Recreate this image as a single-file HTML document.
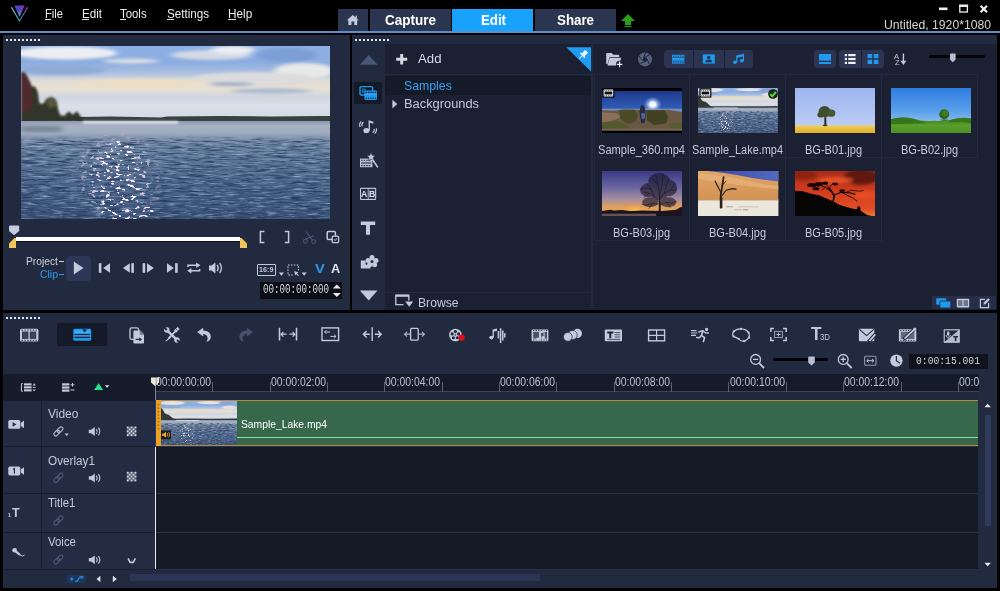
<!DOCTYPE html>
<html lang="en">
<head>
<meta charset="utf-8">
<title>Untitled, 1920*1080 - Video Editor</title>
<style>
html,body{margin:0;padding:0;background:#000;}
body{width:1000px;height:591px;overflow:hidden;font-family:"Liberation Sans",sans-serif;}
#app{position:relative;width:1000px;height:591px;background:#000;overflow:hidden;}
#app div,#app span.t,#app svg.i{position:absolute;box-sizing:border-box;}
span.t{white-space:nowrap;transform-origin:0 50%;}
svg.i{overflow:visible;}
u{text-decoration:underline;text-underline-offset:1px;}

</style>
</head>
<body>
<svg width="0" height="0" style="position:absolute" aria-hidden="true">
<defs>
<linearGradient id="lkSky" x1="0" y1="0" x2="0" y2="1">
 <stop offset="0" stop-color="#8db0e4"/>
 <stop offset="0.22" stop-color="#8cade0"/>
 <stop offset="0.36" stop-color="#abc0e0"/>
 <stop offset="0.46" stop-color="#dedcd8"/>
 <stop offset="0.57" stop-color="#e8e0d2"/>
 <stop offset="0.67" stop-color="#cfd6e2"/>
 <stop offset="0.8" stop-color="#dadfe8"/>
 <stop offset="1" stop-color="#d2d8e2"/>
</linearGradient>
<linearGradient id="lkWater" x1="0" y1="0" x2="0" y2="1">
 <stop offset="0" stop-color="#8a98b0"/>
 <stop offset="0.05" stop-color="#a7b1c4"/>
 <stop offset="0.135" stop-color="#a0abbf"/>
 <stop offset="0.17" stop-color="#7e90ab"/>
 <stop offset="0.32" stop-color="#66809f"/>
 <stop offset="0.55" stop-color="#526b8f"/>
 <stop offset="0.8" stop-color="#435d83"/>
 <stop offset="1" stop-color="#3a5378"/>
</linearGradient>
<linearGradient id="lkFade" x1="0" y1="0" x2="0" y2="1">
 <stop offset="0" stop-color="#9ca8bc" stop-opacity="1"/>
 <stop offset="0.3" stop-color="#93a1b8" stop-opacity="0.9"/>
 <stop offset="1" stop-color="#7e90ab" stop-opacity="0"/>
</linearGradient>
<linearGradient id="lkWaterS" x1="0" y1="0" x2="0" y2="1">
 <stop offset="0" stop-color="#8a98b0"/>
 <stop offset="0.06" stop-color="#a7b1c4"/>
 <stop offset="0.13" stop-color="#9ba7bd"/>
 <stop offset="0.2" stop-color="#6c83a3"/>
 <stop offset="0.45" stop-color="#566f94"/>
 <stop offset="0.8" stop-color="#48628a"/>
 <stop offset="1" stop-color="#3f597f"/>
</linearGradient>
<radialGradient id="lkGl" cx="0.5" cy="0.5" r="0.5">
 <stop offset="0" stop-color="#fff" stop-opacity="1"/>
 <stop offset="0.55" stop-color="#fff" stop-opacity="0.75"/>
 <stop offset="1" stop-color="#fff" stop-opacity="0"/>
</radialGradient>
<filter id="lkBlur" x="-20%" y="-50%" width="140%" height="200%"><feGaussianBlur stdDeviation="3 1.6"/></filter>
<filter id="lkBlur2" x="-20%" y="-50%" width="140%" height="200%"><feGaussianBlur stdDeviation="0.8"/></filter>
<filter id="lkBlur3" x="-5%" y="-50%" width="110%" height="200%"><feGaussianBlur stdDeviation="0.5"/></filter>
<filter id="lkRip" x="0" y="0" width="100%" height="100%" color-interpolation-filters="sRGB">
 <feTurbulence type="fractalNoise" baseFrequency="0.06 0.55" numOctaves="3" seed="7" result="n"/>
 <feColorMatrix in="n" type="matrix" values="0 0 0 0 0.14  0 0 0 0 0.23  0 0 0 0 0.37  2.4 0 0 0 -0.98"/>
</filter>
<filter id="lkRipL" x="0" y="0" width="100%" height="100%" color-interpolation-filters="sRGB">
 <feTurbulence type="fractalNoise" baseFrequency="0.07 0.6" numOctaves="3" seed="19" result="n"/>
 <feColorMatrix in="n" type="matrix" values="0 0 0 0 0.60  0 0 0 0 0.68  0 0 0 0 0.80  2.2 0 0 0 -1.1"/>
</filter>
<filter id="lkSpk" x="0" y="0" width="100%" height="100%" color-interpolation-filters="sRGB">
 <feTurbulence type="fractalNoise" baseFrequency="0.2 0.36" numOctaves="2" seed="3" result="n"/>
 <feColorMatrix in="n" type="matrix" values="0 0 0 0 1  0 0 0 0 0.91  0 0 0 0 0.97  11 0 0 0 -6.45" result="d"/>
 <feComposite in="d" in2="SourceGraphic" operator="in"/>
</filter>

<filter id="lsRip" x="0" y="0" width="100%" height="100%" color-interpolation-filters="sRGB">
 <feTurbulence type="fractalNoise" baseFrequency="0.25 0.9" numOctaves="2" seed="5" result="n"/>
 <feColorMatrix in="n" type="matrix" values="0 0 0 0 0.16  0 0 0 0 0.23  0 0 0 0 0.34  2.0 0 0 0 -0.8"/>
</filter>
<filter id="lsRipL" x="0" y="0" width="100%" height="100%" color-interpolation-filters="sRGB">
 <feTurbulence type="fractalNoise" baseFrequency="0.3 1.0" numOctaves="2" seed="11" result="n"/>
 <feColorMatrix in="n" type="matrix" values="0 0 0 0 0.62  0 0 0 0 0.68  0 0 0 0 0.78  2.0 0 0 0 -1.0"/>
</filter>
<filter id="lsSpk" x="0" y="0" width="100%" height="100%" color-interpolation-filters="sRGB">
 <feTurbulence type="fractalNoise" baseFrequency="0.7 0.9" numOctaves="2" seed="3" result="n"/>
 <feColorMatrix in="n" type="matrix" values="0 0 0 0 1  0 0 0 0 0.95  0 0 0 0 1  10 0 0 0 -5.9" result="d"/>
 <feComposite in="d" in2="SourceGraphic" operator="in"/>
</filter>
<filter id="lsB" x="-20%" y="-50%" width="140%" height="200%"><feGaussianBlur stdDeviation="1 0.5"/></filter>
<linearGradient id="g360" x1="0" y1="0" x2="0" y2="1"><stop offset="0" stop-color="#1d3a8c"/><stop offset="0.5" stop-color="#3460bc"/><stop offset="1" stop-color="#7fa4e2"/></linearGradient>
<radialGradient id="g360s" cx="0.5" cy="0.5" r="0.5"><stop offset="0" stop-color="#fff"/><stop offset="0.3" stop-color="#fff" stop-opacity="0.95"/><stop offset="0.6" stop-color="#cfe0ff" stop-opacity="0.5"/><stop offset="1" stop-color="#8fb0ff" stop-opacity="0"/></radialGradient>
<linearGradient id="gb1" x1="0" y1="0" x2="0" y2="1"><stop offset="0" stop-color="#9db6f0"/><stop offset="1" stop-color="#c2d0f4"/></linearGradient>
<linearGradient id="gb1g" x1="0" y1="0" x2="0" y2="1"><stop offset="0" stop-color="#ecd468"/><stop offset="0.4" stop-color="#e6c040"/><stop offset="1" stop-color="#deb030"/></linearGradient>
<linearGradient id="gb2" x1="0" y1="0" x2="0" y2="1"><stop offset="0" stop-color="#2f7de0"/><stop offset="0.5" stop-color="#5a9fea"/><stop offset="1" stop-color="#b5d6f4"/></linearGradient>
<linearGradient id="gb2g" x1="0" y1="0" x2="0" y2="1"><stop offset="0" stop-color="#3c7f1e"/><stop offset="0.5" stop-color="#5a9e2c"/><stop offset="1" stop-color="#4c8f24"/></linearGradient>
<linearGradient id="gb3" x1="0" y1="0" x2="0" y2="1"><stop offset="0" stop-color="#3a3a86"/><stop offset="0.35" stop-color="#6864a0"/><stop offset="0.6" stop-color="#a08aa0"/><stop offset="0.8" stop-color="#e2a060"/><stop offset="1" stop-color="#f2a844"/></linearGradient>
<radialGradient id="gb3s" cx="0.5" cy="0.5" r="0.5"><stop offset="0" stop-color="#ffe070"/><stop offset="0.4" stop-color="#f8b040" stop-opacity="0.8"/><stop offset="1" stop-color="#f0a040" stop-opacity="0"/></radialGradient>
<linearGradient id="gb4" x1="0" y1="0" x2="0" y2="1"><stop offset="0" stop-color="#dfa468"/><stop offset="0.5" stop-color="#d69658"/><stop offset="1" stop-color="#cc8c50"/></linearGradient>
<linearGradient id="gb4s" x1="0" y1="0" x2="1" y2="0"><stop offset="0" stop-color="#3a4aa8"/><stop offset="1" stop-color="#5568c0"/></linearGradient>
<linearGradient id="gb5" x1="0" y1="0" x2="0" y2="1"><stop offset="0" stop-color="#a82c18"/><stop offset="0.45" stop-color="#d23c1e"/><stop offset="0.85" stop-color="#e24e26"/><stop offset="1" stop-color="#ec7c3a"/></linearGradient>
<filter id="tb1" x="-30%" y="-30%" width="160%" height="160%"><feGaussianBlur stdDeviation="0.6"/></filter>
<filter id="tb2" x="-30%" y="-30%" width="160%" height="160%"><feGaussianBlur stdDeviation="1.5"/></filter>
<filter id="tb3" x="-30%" y="-30%" width="160%" height="160%"><feGaussianBlur stdDeviation="3"/></filter>
</defs>
</svg>

<div id="app">
<div style="left:0px;top:31px;width:1000px;height:2px;background:#5b8ecb;"></div>
<span class="t" style="left:45px;top:8.28px;font-size:12.5px;line-height:12.5px;color:#ececec;font-weight:400;transform:scaleX(0.893);">File</span>
<div style="left:45.2px;top:19.3px;width:6.2px;height:1px;background:#e0e0e0;"></div>
<span class="t" style="left:82px;top:8.28px;font-size:12.5px;line-height:12.5px;color:#ececec;font-weight:400;transform:scaleX(0.928);">Edit</span>
<div style="left:82.2px;top:19.3px;width:6.4px;height:1px;background:#e0e0e0;"></div>
<span class="t" style="left:119.9px;top:8.28px;font-size:12.5px;line-height:12.5px;color:#ececec;font-weight:400;transform:scaleX(0.911);">Tools</span>
<div style="left:120.10000000000001px;top:19.3px;width:5.6px;height:1px;background:#e0e0e0;"></div>
<span class="t" style="left:167.1px;top:8.28px;font-size:12.5px;line-height:12.5px;color:#ececec;font-weight:400;transform:scaleX(0.932);">Settings</span>
<div style="left:167.29999999999998px;top:19.3px;width:6.9px;height:1px;background:#e0e0e0;"></div>
<span class="t" style="left:228.1px;top:8.28px;font-size:12.5px;line-height:12.5px;color:#ececec;font-weight:400;transform:scaleX(0.941);">Help</span>
<div style="left:228.29999999999998px;top:19.3px;width:8.2px;height:1px;background:#e0e0e0;"></div>
<div style="left:338px;top:8.5px;width:30px;height:22.5px;background:#2a3550;"></div>
<div style="left:370px;top:8.5px;width:81px;height:22.5px;background:#2a3550;"></div>
<div style="left:452px;top:8.5px;width:81px;height:22.5px;background:#18a2fc;"></div>
<div style="left:535px;top:8.5px;width:81px;height:22.5px;background:#2a3550;"></div>
<span class="t" style="left:385px;top:13.45px;font-size:14px;line-height:14px;color:#ffffff;font-weight:700;transform:scaleX(0.964);">Capture</span>
<span class="t" style="left:480.5px;top:13.45px;font-size:14px;line-height:14px;color:#ffffff;font-weight:700;transform:scaleX(0.945);">Edit</span>
<span class="t" style="left:557px;top:13.45px;font-size:14px;line-height:14px;color:#ffffff;font-weight:700;transform:scaleX(0.951);">Share</span>
<span class="t" style="left:884px;top:17.73px;font-size:13px;line-height:13px;color:#d6d6d6;font-weight:400;transform:scaleX(0.937);">Untitled, 1920*1080</span>
<div style="left:3px;top:34.6px;width:347px;height:275.5px;background:#222a3f;"></div>
<div style="left:352px;top:34.6px;width:645px;height:275.5px;background:#222a3f;"></div>
<div style="left:385px;top:44.3px;width:206px;height:265.8px;background:#1b2133;"></div>
<div style="left:593px;top:44.3px;width:404px;height:265.8px;background:#1b2133;"></div>
<div style="left:385px;top:76px;width:206px;height:19px;background:#151a28;"></div>
<div style="left:385px;top:74px;width:206px;height:1px;background:#232a3f;"></div>
<div style="left:385px;top:292px;width:206px;height:1px;background:#232a3f;"></div>
<div style="left:593px;top:74px;width:385px;height:1px;background:#232a3f;"></div>
<span class="t" style="left:418px;top:51.89px;font-size:13.5px;line-height:13.5px;color:#d4dae6;font-weight:400;transform:scaleX(0.978);">Add</span>
<span class="t" style="left:403.7px;top:79.97px;font-size:12.5px;line-height:12.5px;color:#3aa0ee;font-weight:400;transform:scaleX(0.983);">Samples</span>
<span class="t" style="left:403.7px;top:97.67px;font-size:12.5px;line-height:12.5px;color:#c3cad8;font-weight:400;transform:scaleX(1.028);">Backgrounds</span>
<span class="t" style="left:418.4px;top:295.53px;font-size:13px;line-height:13px;color:#c3cad8;font-weight:400;transform:scaleX(0.936);">Browse</span>
<div style="left:594px;top:75px;width:96px;height:83px;background:transparent;border-right:1px solid #232a3f;border-bottom:1px solid #232a3f;border-left:1px solid #232a3f;"></div>
<div style="left:690px;top:75px;width:96px;height:83px;background:transparent;border-right:1px solid #232a3f;border-bottom:1px solid #232a3f;"></div>
<div style="left:786px;top:75px;width:96px;height:83px;background:transparent;border-right:1px solid #232a3f;border-bottom:1px solid #232a3f;"></div>
<div style="left:882px;top:75px;width:96px;height:83px;background:transparent;border-right:1px solid #232a3f;border-bottom:1px solid #232a3f;"></div>
<div style="left:594px;top:158px;width:96px;height:83px;background:transparent;border-right:1px solid #232a3f;border-bottom:1px solid #232a3f;border-left:1px solid #232a3f;"></div>
<div style="left:690px;top:158px;width:96px;height:83px;background:transparent;border-right:1px solid #232a3f;border-bottom:1px solid #232a3f;"></div>
<div style="left:786px;top:158px;width:96px;height:83px;background:transparent;border-right:1px solid #232a3f;border-bottom:1px solid #232a3f;"></div>
<span class="t" style="left:598.0px;top:144.22px;font-size:12px;line-height:12px;color:#c3cad8;font-weight:400;transform:scaleX(0.925);">Sample_360.mp4</span>
<span class="t" style="left:692.0px;top:144.22px;font-size:12px;line-height:12px;color:#c3cad8;font-weight:400;transform:scaleX(0.909);">Sample_Lake.mp4</span>
<span class="t" style="left:805.0px;top:144.22px;font-size:12px;line-height:12px;color:#c3cad8;font-weight:400;transform:scaleX(0.919);">BG-B01.jpg</span>
<span class="t" style="left:901.0px;top:144.22px;font-size:12px;line-height:12px;color:#c3cad8;font-weight:400;transform:scaleX(0.919);">BG-B02.jpg</span>
<span class="t" style="left:613.0px;top:227.22px;font-size:12px;line-height:12px;color:#c3cad8;font-weight:400;transform:scaleX(0.919);">BG-B03.jpg</span>
<span class="t" style="left:709.0px;top:227.22px;font-size:12px;line-height:12px;color:#c3cad8;font-weight:400;transform:scaleX(0.919);">BG-B04.jpg</span>
<span class="t" style="left:805.0px;top:227.22px;font-size:12px;line-height:12px;color:#c3cad8;font-weight:400;transform:scaleX(0.919);">BG-B05.jpg</span>
<div style="left:3px;top:313px;width:994px;height:275px;background:#222a3f;"></div>
<div style="left:3px;top:373.5px;width:152px;height:27px;background:#171c2c;"></div>
<div style="left:155px;top:374px;width:824px;height:18px;background:#161b2a;"></div>
<div style="left:155px;top:391px;width:824px;height:1px;background:#3a4258;"></div>
<div style="left:155px;top:392px;width:824px;height:9px;background:#20283c;"></div>
<div style="left:155px;top:401px;width:823px;height:168px;background:#151a27;"></div>
<div style="left:4px;top:400.5px;width:37px;height:45.0px;background:#232c43;"></div>
<div style="left:42px;top:400.5px;width:112px;height:45.0px;background:#232c43;"></div>
<div style="left:4px;top:445.5px;width:151px;height:1.4px;background:#181d2e;"></div>
<div style="left:156px;top:445.5px;width:822px;height:1px;background:#2a3146;"></div>
<div style="left:4px;top:447px;width:37px;height:45.80000000000001px;background:#232c43;"></div>
<div style="left:42px;top:447px;width:112px;height:45.80000000000001px;background:#232c43;"></div>
<div style="left:4px;top:492.8px;width:151px;height:1.4px;background:#181d2e;"></div>
<div style="left:156px;top:492.8px;width:822px;height:1px;background:#2a3146;"></div>
<div style="left:4px;top:494px;width:37px;height:38px;background:#232c43;"></div>
<div style="left:42px;top:494px;width:112px;height:38px;background:#232c43;"></div>
<div style="left:4px;top:532px;width:151px;height:1.4px;background:#181d2e;"></div>
<div style="left:156px;top:532px;width:822px;height:1px;background:#2a3146;"></div>
<div style="left:4px;top:533.2px;width:37px;height:35.39999999999998px;background:#232c43;"></div>
<div style="left:42px;top:533.2px;width:112px;height:35.39999999999998px;background:#232c43;"></div>
<div style="left:4px;top:568.6px;width:151px;height:1.4px;background:#181d2e;"></div>
<div style="left:156px;top:568.6px;width:822px;height:1px;background:#2a3146;"></div>
<div style="left:41px;top:401px;width:1px;height:168px;background:#1a2031;"></div>
<span class="t" style="left:48.3px;top:407.98px;font-size:12.5px;line-height:12.5px;color:#c3cad8;font-weight:400;transform:scaleX(0.957);">Video</span>
<span class="t" style="left:48.3px;top:454.98px;font-size:12.5px;line-height:12.5px;color:#c3cad8;font-weight:400;transform:scaleX(0.939);">Overlay1</span>
<span class="t" style="left:48.3px;top:497.48px;font-size:12.5px;line-height:12.5px;color:#c3cad8;font-weight:400;transform:scaleX(0.910);">Title1</span>
<span class="t" style="left:48.3px;top:536.27px;font-size:12.5px;line-height:12.5px;color:#c3cad8;font-weight:400;transform:scaleX(0.915);">Voice</span>
<span class="t" style="left:156.0px;top:375.72px;font-size:12px;line-height:12px;color:#b9c0cf;font-weight:400;transform:scaleX(0.867);">00:00:00:00</span>
<span class="t" style="left:270.7px;top:375.72px;font-size:12px;line-height:12px;color:#b9c0cf;font-weight:400;transform:scaleX(0.867);">00:00:02:00</span>
<span class="t" style="left:385.4px;top:375.72px;font-size:12px;line-height:12px;color:#b9c0cf;font-weight:400;transform:scaleX(0.867);">00:00:04:00</span>
<span class="t" style="left:500.1px;top:375.72px;font-size:12px;line-height:12px;color:#b9c0cf;font-weight:400;transform:scaleX(0.867);">00:00:06:00</span>
<span class="t" style="left:614.8px;top:375.72px;font-size:12px;line-height:12px;color:#b9c0cf;font-weight:400;transform:scaleX(0.867);">00:00:08:00</span>
<span class="t" style="left:729.5px;top:375.72px;font-size:12px;line-height:12px;color:#b9c0cf;font-weight:400;transform:scaleX(0.867);">00:00:10:00</span>
<span class="t" style="left:844.2px;top:375.72px;font-size:12px;line-height:12px;color:#b9c0cf;font-weight:400;transform:scaleX(0.867);">00:00:12:00</span>
<div style="left:957.9px;top:374px;width:21.1px;height:18px;overflow:hidden">
<span class="t" style="left:1px;top:1.72px;font-size:12px;line-height:12px;color:#b9c0cf;font-weight:400;transform:scaleX(0.867);">00:00:14:00</span>
</div>
<div style="left:155px;top:382px;width:1px;height:9.5px;background:#566078;"></div>
<div style="left:212px;top:382px;width:1px;height:9.5px;background:#566078;"></div>
<div style="left:270px;top:382px;width:1px;height:9.5px;background:#566078;"></div>
<div style="left:327px;top:382px;width:1px;height:9.5px;background:#566078;"></div>
<div style="left:384px;top:382px;width:1px;height:9.5px;background:#566078;"></div>
<div style="left:442px;top:382px;width:1px;height:9.5px;background:#566078;"></div>
<div style="left:499px;top:382px;width:1px;height:9.5px;background:#566078;"></div>
<div style="left:556px;top:382px;width:1px;height:9.5px;background:#566078;"></div>
<div style="left:614px;top:382px;width:1px;height:9.5px;background:#566078;"></div>
<div style="left:671px;top:382px;width:1px;height:9.5px;background:#566078;"></div>
<div style="left:728px;top:382px;width:1px;height:9.5px;background:#566078;"></div>
<div style="left:786px;top:382px;width:1px;height:9.5px;background:#566078;"></div>
<div style="left:843px;top:382px;width:1px;height:9.5px;background:#566078;"></div>
<div style="left:901px;top:382px;width:1px;height:9.5px;background:#566078;"></div>
<div style="left:958px;top:382px;width:1px;height:9.5px;background:#566078;"></div>
<div style="left:156px;top:400.3px;width:822px;height:46px;background:#37684b;border-top:1.2px solid #b98a3c;border-bottom:1.2px solid #b98a3c;"></div>
<div style="left:156px;top:437px;width:822px;height:1px;background:#8fe0a0;"></div>
<div style="left:156px;top:400.3px;width:5px;height:46px;background:#eea022;"></div>
<span class="t" style="left:241px;top:418.70px;font-size:11px;line-height:11px;color:#ffffff;font-weight:400;transform:scaleX(0.937);">Sample_Lake.mp4</span>
<div style="left:155px;top:386px;width:1px;height:14px;background:#7f879c;"></div>
<div style="left:154.6px;top:400px;width:1.4px;height:46.5px;background:#1c3a86;"></div>
<div style="left:155px;top:446.5px;width:1.2px;height:122px;background:#e6ecff;"></div>
<div style="left:985px;top:415px;width:6px;height:111px;background:#2f3a5c;"></div>
<div style="left:130px;top:574px;width:410px;height:7px;background:#2c3654;"></div>
<div style="left:260px;top:281.8px;width:82px;height:16.8px;background:#0c0e14;"></div>
<div style="left:909px;top:354px;width:79px;height:15px;background:#10131c;"></div>
<svg class="i" style="left:21px;top:46px;overflow:hidden" width="309" height="173" viewBox="0 0 309 173" preserveAspectRatio="none">
 <rect width="309" height="75" fill="url(#lkSky)"/>
 <g filter="url(#lkBlur)">
  <ellipse cx="44" cy="7" rx="52" ry="6.5" fill="#eceef2"/>
  <ellipse cx="110" cy="15" rx="28" ry="2.5" fill="#d9dde6"/>
  <ellipse cx="190" cy="9" rx="40" ry="5" fill="#d3dae6"/>
  <ellipse cx="212" cy="4" rx="22" ry="4" fill="#eceef2"/>
  <ellipse cx="266" cy="9" rx="30" ry="7" fill="#7b9fd6"/>
  <ellipse cx="283" cy="25" rx="30" ry="8" fill="#e8e8e8"/>
  <ellipse cx="232" cy="33" rx="60" ry="7" fill="#dcdcdc"/>
  <ellipse cx="120" cy="38" rx="70" ry="5" fill="#ecdfc8"/>
  <ellipse cx="250" cy="45" rx="40" ry="2.5" fill="#aab9d0"/>
  <ellipse cx="210" cy="38" rx="22" ry="2" fill="#9fadc6"/>
  <ellipse cx="40" cy="24" rx="45" ry="5" fill="#8eabd6"/>
 </g>
 <path d="M55 71 L90 70.5 L140 71.5 L146 70.5 L200 70 L250 70.5 L300 70 L309 70 L309 75.5 L55 75.5Z" fill="#36423f" filter="url(#lkBlur3)"/>
 <g filter="url(#lkBlur2)">
  <path d="M0 27 L3 26 L6 30 L9 36 L11 41 L13 40 L15 42 L17 47 L18 56 L20 58 L23 57 L25 53 L28 51.5 L31 51 L34 52.5 L36 56 L37 63 L39 69 L43 70 L46 67 L48 65.5 L50 67 L52 69 L54 66.5 L56 65.5 L58 68 L60 71 L62 76 L0 77Z" fill="#30352c"/>
  <path d="M0 27 L3 26 L6 30 L9 36 L11 41 L12 52 L11 64 L0 66Z" fill="#4f2c2f"/>
  <path d="M25 55 L28 52.5 L32 52 L35 55 L36 60 L28 62Z" fill="#55563a"/>
 </g>
 <rect y="75" width="309" height="98" fill="url(#lkWater)"/>
 <rect x="62" y="75" width="95" height="2.6" fill="#f0f2f6" opacity="0.9" filter="url(#lkBlur2)"/>
 <rect x="0" y="80" width="40" height="6" fill="#6c7789" opacity="0.7" filter="url(#lkBlur)"/>
 <rect y="88" width="309" height="85" filter="url(#lkRip)"/>
 <rect y="88" width="309" height="85" filter="url(#lkRipL)"/>
 <rect y="87.5" width="309" height="8" fill="url(#lkFade)"/>
 <g filter="url(#lkSpk)">
  <ellipse cx="97" cy="132" rx="48" ry="48" fill="url(#lkGl)"/>
  <ellipse cx="98" cy="134" rx="20" ry="40" fill="#fff"/>
  <ellipse cx="108" cy="166" rx="28" ry="8" fill="#fff"/>
 </g>
</svg>
<svg preserveAspectRatio="none" class="i" style="left:601.9px;top:87.9px;overflow:hidden" width="80.3" height="45.4" viewBox="0 0 80 45"><rect width="80" height="45" fill="#000"/>
<rect y="3" width="80" height="39" fill="url(#g360)"/>
<ellipse cx="50.5" cy="16.5" rx="9" ry="8" fill="url(#g360s)"/>
<rect y="20.5" width="80" height="3" fill="#8a9ab8" opacity="0.8"/>
<path d="M0 22 L12 22.5 L22 21 L32 21.5 L50 22 L66 21.5 L80 24 L80 42 L0 42Z" fill="#6a5744"/>
<g filter="url(#tb1)">
<path d="M0 24 L14 25 L20 28 L10 33 L0 34Z" fill="#8a7058"/>
<path d="M17 22 L32 21.5 L36 26 L34 33 L26 36 L18 30Z" fill="#4a4c26"/>
<path d="M44 22 L62 22 L66 28 L64 35 L52 37 L45 32Z" fill="#3f4220"/>
<path d="M0 35 L12 32 L22 35 L28 40 L0 42Z" fill="#55582c"/>
<path d="M66 36 L80 34 L80 42 L68 42Z" fill="#585a30"/>
<path d="M0 40.5 L80 40.5 L80 42 L0 42Z" fill="#7a6450"/>
<path d="M38.6 17.5 Q40.4 16 42 18 L43.4 23 L43.6 29 L42.2 35 L39 35 L38 29 L37.4 23Z" fill="#262c44"/>
<path d="M39 25 L43 25 L43.2 30 L39.6 31Z" fill="#55639a"/>
</g></svg>
<svg class="i" style="left:698.4px;top:87.9px;overflow:hidden" width="79.8" height="45.4" viewBox="0 0 80 45" preserveAspectRatio="none">
 <rect width="80" height="19.5" fill="url(#lkSky)"/>
 <g filter="url(#lsB)">
  <ellipse cx="12" cy="2" rx="13" ry="2" fill="#e4e4e6"/>
  <ellipse cx="52" cy="1.6" rx="14" ry="1.6" fill="#dfe2e8"/>
  <ellipse cx="68" cy="2.4" rx="7" ry="1.8" fill="#86a5d6"/>
  <ellipse cx="72" cy="6.5" rx="8" ry="2" fill="#e2e1e0"/>
  <ellipse cx="32" cy="10" rx="18" ry="1.6" fill="#e9dcc6"/>
  <ellipse cx="10" cy="6" rx="11" ry="1.4" fill="#8eabd6"/>
 </g>
 <path d="M0 7 L2 9 L4 12.5 L6 13.5 L8 14 L10 15.5 L12 17.5 L14 18 L16 18.1 L30 18 L50 18.1 L80 17.9 L80 19.7 L0 19.9Z" fill="#333a36"/>
 <rect y="19.5" width="80" height="25.5" fill="url(#lkWaterS)"/>
 <rect x="16" y="19.4" width="24" height="0.8" fill="#f0f2f6" opacity="0.85"/>
 <rect y="23.4" width="80" height="21.6" filter="url(#lsRip)"/>
 <rect y="23.4" width="80" height="21.6" filter="url(#lsRipL)"/>
 <g filter="url(#lsSpk)"><ellipse cx="27" cy="34" rx="9" ry="11" fill="url(#lkGl)"/><ellipse cx="26.5" cy="35" rx="4.5" ry="9" fill="#fff"/></g>
</svg>
<svg preserveAspectRatio="none" class="i" style="left:794.6px;top:87.9px;overflow:hidden" width="80.3" height="45.4" viewBox="0 0 80 45"><rect width="80" height="45" fill="url(#gb1)"/>
<rect y="37" width="80" height="8" fill="url(#gb1g)"/>
<g filter="url(#tb1)">
<ellipse cx="29.5" cy="23.5" rx="6" ry="5.6" fill="#3f4d2c"/>
<ellipse cx="36" cy="25" rx="4.2" ry="3.6" fill="#4a5632"/>
<ellipse cx="25.5" cy="26.5" rx="3.2" ry="2.8" fill="#3f4d2c"/>
<rect x="29.2" y="29" width="2" height="8" fill="#2e2a20"/>
<ellipse cx="30" cy="37" rx="2.5" ry="0.9" fill="#4a4020"/>
</g></svg>
<svg preserveAspectRatio="none" class="i" style="left:890.8px;top:87.9px;overflow:hidden" width="80.3" height="45.4" viewBox="0 0 80 45"><rect width="80" height="45" fill="url(#gb2)"/>
<path d="M0 31 Q10 28 22 30.5 Q32 33.5 42 32.5 Q55 33 62 31 Q72 28.5 80 30.5 L80 45 L0 45Z" fill="url(#gb2g)"/>
<path d="M0 31 Q10 28 22 30.5 Q30 33 36 35 L0 36Z" fill="#35761a" filter="url(#tb1)"/>
<path d="M58 32 Q70 28.5 80 30.5 L80 35 Q70 33 58 34Z" fill="#37781c" filter="url(#tb1)"/>
<g filter="url(#tb1)"><circle cx="53" cy="26" r="5" fill="#2f6a1c"/><circle cx="54" cy="25" r="3" fill="#3f7c24"/></g>
<ellipse cx="53" cy="31.8" rx="4" ry="0.8" fill="#2a5c14" opacity="0.7"/></svg>
<svg preserveAspectRatio="none" class="i" style="left:601.9px;top:171px;overflow:hidden" width="80.3" height="45.4" viewBox="0 0 80 45"><rect width="80" height="45" fill="url(#gb3)"/>
<ellipse cx="33" cy="40" rx="16" ry="7" fill="url(#gb3s)"/>
<rect y="40" width="80" height="5" fill="#1c1418"/>
<rect y="42.3" width="54" height="2.7" fill="#6e5a5c" opacity="0.9" filter="url(#tb1)"/>
<g filter="url(#tb1)" fill="#1a1420">
<path d="M0 39.6 L8 38.4 L12 39.2 L20 38.6 L28 39.6 L40 39.2 L60 39.6 L74 38.4 L78 36 L80 35.6 L80 41 L0 41Z"/>
<path d="M56.4 44 L56.8 30 L57.4 22 L58.4 30 L58.6 44Z"/>
</g>
<g stroke="#1a1422" fill="none" stroke-linecap="round" opacity="0.9">
<path d="M57.4 31 L52 25 L47 22 L42 21 M52 25 L49 18 L45 13 M57.4 28 L62 22 L68 19 L73 19 M62 22 L64 14 L67 8 M57.4 24 L56 14 L54 5 M56 14 L50 8 M57.4 26 L60 12 L61 3 M57.4 33 L50 32 L44 34 L40 33 M57.6 34 L64 31 L70 32 L74 30 M49 18 L43 17 L38 18 M68 19 L72 13 M47 22 L42 26 M64 31 L68 36 M50 32 L47 37" stroke-width="0.7"/>
</g>
<g filter="url(#tb1)" fill="#1c1528" opacity="0.62">
<ellipse cx="57" cy="10" rx="11" ry="8"/>
<ellipse cx="47" cy="19" rx="9" ry="7"/>
<ellipse cx="67" cy="17" rx="8" ry="8"/>
<ellipse cx="57" cy="20" rx="10" ry="9"/>
<ellipse cx="48" cy="31" rx="8" ry="5"/>
<ellipse cx="66" cy="31" rx="8" ry="5"/>
</g></svg>
<svg preserveAspectRatio="none" class="i" style="left:698.4px;top:171px;overflow:hidden" width="80.3" height="45.4" viewBox="0 0 80 45"><rect width="80" height="45" fill="url(#gb4)"/>
<path d="M10 0 L80 0 L80 10.5 Q60 8.4 40 4.2 Q24 1.2 10 0Z" fill="url(#gb4s)"/>
<path d="M0 2 Q30 5 50 10 Q66 13.6 80 14.6 L80 18 Q50 16 0 8Z" fill="#e8b47c" opacity="0.7" filter="url(#tb1)"/>
<rect y="28.4" width="80" height="16.6" fill="#ece7dc"/>
<rect y="27.8" width="80" height="1.4" fill="#c99666" filter="url(#tb1)"/>
<g filter="url(#tb1)" opacity="0.8"><rect x="28" y="35" width="7" height="0.9" fill="#8a8680"/><rect x="40" y="35.2" width="20" height="0.7" fill="#aaa69e"/><rect x="36" y="38" width="8" height="0.8" fill="#aaa69e"/><rect x="45" y="38" width="5" height="1" fill="#77736c"/></g>
<g stroke="#2a211c" fill="none" stroke-linecap="round">
<path d="M23 36 L22.6 24 L24 16 L25.5 6" stroke-width="1.8"/>
<path d="M23 36 L23 27" stroke-width="2.6"/>
<path d="M23.3 22 L19 14 L17 10" stroke-width="1.1"/>
<path d="M23.5 25 L28 19 L34 17.5 L38 18" stroke-width="1.1"/>
<path d="M24.2 14 L28 10" stroke-width="0.9"/>
</g></svg>
<svg preserveAspectRatio="none" class="i" style="left:794.6px;top:171px;overflow:hidden" width="80.3" height="45.4" viewBox="0 0 80 45"><rect width="80" height="45" fill="url(#gb5)"/>
<g filter="url(#tb2)">
<ellipse cx="66" cy="6" rx="17" ry="8" fill="#5c1610" opacity="0.95"/>
<ellipse cx="8" cy="4" rx="14" ry="5" fill="#88200f" opacity="0.85"/>
<ellipse cx="40" cy="9" rx="18" ry="3" fill="#ee5a2c" opacity="0.8"/>
<ellipse cx="70" cy="24" rx="12" ry="4" fill="#e85026" opacity="0.8"/>
</g>
<path d="M0 19.5 L8 20 L16 22.5 L24 24 L32 27.5 L38 30 L44 33.5 L52 36 L60 38 L64 37 L66 40 L72 43.5 L78 45 L0 45Z" fill="#080506"/>
<path d="M62 35.5 L64.5 35 L65.5 38 L62.5 38.5Z" fill="#080506"/>
<g stroke="#0a0606" fill="none" stroke-linecap="round">
<path d="M38 30 L39 25 L37 21 L34 17" stroke-width="1.6"/>
<path d="M37 21 L30 16 L24 14 L19 13.5" stroke-width="1"/>
<path d="M38.5 24 L46 21 L54 21.5 L60 23" stroke-width="1"/>
<path d="M46 21 L52 24 L58 27 L62 30" stroke-width="0.8"/>
<path d="M34 17 L30 11.5 M34 17 L38 12 M30 16 L27 19 M24 14 L22 17 L18 18" stroke-width="0.8"/>
<path d="M50 21.5 L56 19 L64 20 L68 19.5" stroke-width="0.7"/>
</g>
<g fill="#0a0606" filter="url(#tb1)" opacity="0.9">
<ellipse cx="17" cy="14" rx="5" ry="2.2"/>
<ellipse cx="24" cy="13" rx="4" ry="2"/>
<ellipse cx="30" cy="12" rx="3" ry="1.6"/>
<ellipse cx="21" cy="17.5" rx="3.5" ry="1.6"/>
<ellipse cx="40" cy="13" rx="3" ry="1.4"/>
<ellipse cx="47" cy="19.5" rx="3" ry="1.3"/>
</g></svg>
<svg class="i" style="left:602px;top:88px;" width="12.5" height="9.5" viewBox="0 0 12.5 9.5"><rect x="0.4" y="0.2" width="12" height="9.4" fill="#05060a"/>
<rect x="1.6" y="1.6" width="9.6" height="6.8" rx="0.6" fill="#f4f4f4"/>
<rect x="2.6" y="3.6" width="7.6" height="2.8" fill="#111"/>
<path d="M2.4 2.6h0.9M4.2 2.6h0.9M6 2.6h0.9M7.8 2.6h0.9M9.6 2.6h0.9M2.4 7.4h0.9M4.2 7.4h0.9M6 7.4h0.9M7.8 7.4h0.9M9.6 7.4h0.9" stroke="#111" stroke-width="0.7"/></svg>
<svg class="i" style="left:699px;top:88px;" width="12.5" height="9.5" viewBox="0 0 12.5 9.5"><rect x="0.4" y="0.2" width="12" height="9.4" fill="#05060a"/>
<rect x="1.6" y="1.6" width="9.6" height="6.8" rx="0.6" fill="#f4f4f4"/>
<rect x="2.6" y="3.6" width="7.6" height="2.8" fill="#111"/>
<path d="M2.4 2.6h0.9M4.2 2.6h0.9M6 2.6h0.9M7.8 2.6h0.9M9.6 2.6h0.9M2.4 7.4h0.9M4.2 7.4h0.9M6 7.4h0.9M7.8 7.4h0.9M9.6 7.4h0.9" stroke="#111" stroke-width="0.7"/></svg>
<svg class="i" style="left:768px;top:88.5px;" width="10" height="10" viewBox="0 0 10 10"><circle cx="5" cy="5" r="4.8" fill="#0a0f0a"/><circle cx="5" cy="5" r="4.2" fill="#1c2a16"/><path d="M2.2 5.2 L4.3 7.3 L8 2.9" fill="none" stroke="#4fe04a" stroke-width="1.8"/></svg>
<svg class="i" style="left:161px;top:401.4px;overflow:hidden" width="76" height="44" viewBox="0 0 80 45" preserveAspectRatio="none">
 <rect width="80" height="19.5" fill="url(#lkSky)"/>
 <g filter="url(#lsB)">
  <ellipse cx="12" cy="2" rx="13" ry="2" fill="#e4e4e6"/>
  <ellipse cx="52" cy="1.6" rx="14" ry="1.6" fill="#dfe2e8"/>
  <ellipse cx="68" cy="2.4" rx="7" ry="1.8" fill="#86a5d6"/>
  <ellipse cx="72" cy="6.5" rx="8" ry="2" fill="#e2e1e0"/>
  <ellipse cx="32" cy="10" rx="18" ry="1.6" fill="#e9dcc6"/>
  <ellipse cx="10" cy="6" rx="11" ry="1.4" fill="#8eabd6"/>
 </g>
 <path d="M0 7 L2 9 L4 12.5 L6 13.5 L8 14 L10 15.5 L12 17.5 L14 18 L16 18.1 L30 18 L50 18.1 L80 17.9 L80 19.7 L0 19.9Z" fill="#333a36"/>
 <rect y="19.5" width="80" height="25.5" fill="url(#lkWaterS)"/>
 <rect x="16" y="19.4" width="24" height="0.8" fill="#f0f2f6" opacity="0.85"/>
 <rect y="23.4" width="80" height="21.6" filter="url(#lsRip)"/>
 <rect y="23.4" width="80" height="21.6" filter="url(#lsRipL)"/>
 <g filter="url(#lsSpk)"><ellipse cx="27" cy="34" rx="9" ry="11" fill="url(#lkGl)"/><ellipse cx="26.5" cy="35" rx="4.5" ry="9" fill="#fff"/></g>
</svg>
<svg class="i" style="left:6px;top:39px" width="36" height="2" viewBox="6 39 36 2"><rect x="6" y="39" width="2" height="2" fill="#e3e6ee"/><rect x="10" y="39" width="2" height="2" fill="#e3e6ee"/><rect x="14" y="39" width="2" height="2" fill="#e3e6ee"/><rect x="18" y="39" width="2" height="2" fill="#e3e6ee"/><rect x="22" y="39" width="2" height="2" fill="#e3e6ee"/><rect x="26" y="39" width="2" height="2" fill="#e3e6ee"/><rect x="30" y="39" width="2" height="2" fill="#e3e6ee"/><rect x="34" y="39" width="2" height="2" fill="#e3e6ee"/><rect x="38" y="39" width="2" height="2" fill="#e3e6ee"/></svg>
<svg class="i" style="left:355px;top:39px" width="36" height="2" viewBox="355 39 36 2"><rect x="355" y="39" width="2" height="2" fill="#e3e6ee"/><rect x="359" y="39" width="2" height="2" fill="#e3e6ee"/><rect x="363" y="39" width="2" height="2" fill="#e3e6ee"/><rect x="367" y="39" width="2" height="2" fill="#e3e6ee"/><rect x="371" y="39" width="2" height="2" fill="#e3e6ee"/><rect x="375" y="39" width="2" height="2" fill="#e3e6ee"/><rect x="379" y="39" width="2" height="2" fill="#e3e6ee"/><rect x="383" y="39" width="2" height="2" fill="#e3e6ee"/><rect x="387" y="39" width="2" height="2" fill="#e3e6ee"/></svg>
<svg class="i" style="left:6px;top:317px" width="36" height="2" viewBox="6 317 36 2"><rect x="6" y="317" width="2" height="2" fill="#e3e6ee"/><rect x="10" y="317" width="2" height="2" fill="#e3e6ee"/><rect x="14" y="317" width="2" height="2" fill="#e3e6ee"/><rect x="18" y="317" width="2" height="2" fill="#e3e6ee"/><rect x="22" y="317" width="2" height="2" fill="#e3e6ee"/><rect x="26" y="317" width="2" height="2" fill="#e3e6ee"/><rect x="30" y="317" width="2" height="2" fill="#e3e6ee"/><rect x="34" y="317" width="2" height="2" fill="#e3e6ee"/><rect x="38" y="317" width="2" height="2" fill="#e3e6ee"/></svg>
<svg class="i" style="left:10px;top:4px" width="19" height="19" viewBox="10 4 19 19"><defs><linearGradient id="lgA" x1="0" y1="0" x2="1" y2="0.6"><stop offset="0" stop-color="#2b55c8"/><stop offset="0.5" stop-color="#5a3cc0"/><stop offset="1" stop-color="#b030a8"/></linearGradient>
<linearGradient id="lgC" x1="0" y1="0" x2="0" y2="1"><stop offset="0.35" stop-color="#20b8c8" stop-opacity="0"/><stop offset="1" stop-color="#20c0c8" stop-opacity="0.95"/></linearGradient>
<linearGradient id="lgB" x1="0" y1="0" x2="1" y2="0"><stop offset="0" stop-color="#b8c6d8"/><stop offset="0.45" stop-color="#30c4b4"/><stop offset="0.6" stop-color="#4a78c8"/><stop offset="1" stop-color="#9a48b8"/></linearGradient></defs>
<path d="M14.4 5.4 L24.6 5.4 L19.5 16.8Z" fill="url(#lgA)"/><path d="M14.4 5.4 L24.6 5.4 L19.5 16.8Z" fill="url(#lgC)"/>
<path d="M11.4 7.2 L19.5 21 L27.6 7.2" fill="none" stroke="url(#lgB)" stroke-width="1.1" stroke-linejoin="miter"/></svg>
<svg class="i" style="left:346px;top:14px" width="14" height="12" viewBox="346 14 14 12"><path d="M352.8 15 L346.8 20.3 L348.4 20.3 L348.4 25 L351.4 25 L351.4 21.6 L354.2 21.6 L354.2 25 L357.2 25 L357.2 20.3 L358.8 20.3Z" fill="#c3cadb"/><rect x="355.6" y="15.6" width="1.4" height="2.6" fill="#c3cadb"/></svg>
<svg class="i" style="left:620px;top:13px" width="16" height="15" viewBox="620 13 16 15"><path d="M628 14 L635 21 L631 21 L631 25 L625 25 L625 21 L621 21Z" fill="#2f9e1c"/><rect x="624.5" y="25.8" width="7" height="1.4" fill="#2b8a1a"/></svg>
<svg class="i" style="left:938px;top:4px" width="52" height="10" viewBox="938 4 52 10"><rect x="939" y="7.5" width="8.5" height="2.6" fill="#f0f0f0"/><rect x="959.8" y="6" width="7.6" height="6" fill="none" stroke="#f0f0f0" stroke-width="1.3"/><rect x="959.1" y="4.5" width="9" height="2.4" fill="#f0f0f0"/><path d="M980.6 5.8 L987 12.2 M987 5.8 L980.6 12.2" stroke="#f0f0f0" stroke-width="2.2"/></svg>
<svg class="i" style="left:8px;top:225px" width="12" height="11" viewBox="8 225 12 11"><path d="M9 226.6 Q9 225.6 10 225.6 L18.2 225.6 Q19.2 225.6 19.2 226.6 L19.2 231 L14.1 235.2 L9 231Z" fill="#c4cbdd"/></svg>
<div style="left:16px;top:237px;width:224px;height:4px;background:#ffffff;"></div>
<div style="left:16px;top:241px;width:224px;height:1px;background:#0a0c12;"></div>
<svg class="i" style="left:8px;top:237px" width="9" height="11" viewBox="8 237 9 11"><path d="M9 248 L9 243.5 L14.5 238 L16 238 L16 248Z" fill="#f2c55c"/></svg>
<svg class="i" style="left:239px;top:237px" width="9" height="11" viewBox="239 237 9 11"><path d="M240 238 L241.5 238 L247 243.5 L247 248 L240 248Z" fill="#f2c55c"/></svg>
<span class="t" style="left:26px;top:255.70px;font-size:11px;line-height:11px;color:#c9cfdc;font-weight:400;transform:scaleX(0.934);">Project</span>
<div style="left:58.5px;top:260.5px;width:5px;height:1.3px;background:#c9cfdc;"></div>
<span class="t" style="left:39.5px;top:269.40px;font-size:11px;line-height:11px;color:#2a9ae8;font-weight:400;transform:scaleX(0.950);">Clip</span>
<div style="left:58.5px;top:274.2px;width:5px;height:1.3px;background:#2a9ae8;"></div>
<div style="left:66px;top:255.5px;width:24.5px;height:25px;background:#2c3757;border-radius:3.5px;"></div>
<svg class="i" style="left:66px;top:255px" width="25" height="26" viewBox="66 255 25 26"><path d="M73.8 261.5 L83.5 268 L73.8 274.6Z" fill="#c3cadb"/></svg>
<svg class="i" style="left:98px;top:262px" width="126" height="12" viewBox="98 262 126 12"><rect x="98.8" y="263.2" width="2.6" height="9.6" fill="#c3cadb"/><path d="M110 263.2 L103.2 268 L110 272.8Z" fill="#c3cadb"/>
<path d="M129.8 263.2 L123 268 L129.8 272.8Z" fill="#c3cadb"/><rect x="131.3" y="263.2" width="2.6" height="9.6" fill="#c3cadb"/>
<rect x="142.6" y="263.2" width="2.6" height="9.6" fill="#c3cadb"/><path d="M147 263.2 L153.8 268 L147 272.8Z" fill="#c3cadb"/>
<path d="M167 263.2 L173.8 268 L167 272.8Z" fill="#c3cadb"/><rect x="175.1" y="263.2" width="2.6" height="9.6" fill="#c3cadb"/>
<g fill="none" stroke="#c3cadb" stroke-width="1.5"><path d="M188 267 L188 265.2 L197 265.2"/><path d="M199.6 269 L199.6 270.8 L190.6 270.8"/></g>
<path d="M196.2 262.4 L200.4 265.2 L196.2 268Z" fill="#c3cadb"/><path d="M191.4 268 L187.2 270.8 L191.4 273.6Z" fill="#c3cadb"/>
<path d="M209 265.6 L211.6 265.6 L215.4 262.6 L215.4 273.4 L211.6 270.4 L209 270.4Z" fill="#c3cadb"/>
<path d="M217.2 264.8 Q219.2 268 217.2 271.2" fill="none" stroke="#c3cadb" stroke-width="1.3"/>
<path d="M219.6 263 Q223.2 268 219.6 273" fill="none" stroke="#c3cadb" stroke-width="1.3"/></svg>
<svg class="i" style="left:259px;top:230px" width="82" height="14" viewBox="259 230 82 14"><path d="M264.4 231.6 L260.4 231.6 L260.4 242.4 L264.4 242.4" fill="none" stroke="#c3cadb" stroke-width="1.5"/>
<path d="M284.8 231.6 L288.6 231.6 L288.6 242.4 L284.8 242.4" fill="none" stroke="#c3cadb" stroke-width="1.5"/>
<g fill="none" stroke="#4c5775" stroke-width="1.1"><path d="M306 231.5 L312.4 240.2 M314 235.4 L304.6 239.4"/><circle cx="313.6" cy="241.6" r="1.9"/><circle cx="305.4" cy="241.2" r="1.9"/></g>
<rect x="327.2" y="231.4" width="8.2" height="8.2" rx="1.2" fill="none" stroke="#c3cadb" stroke-width="1.5"/>
<rect x="332.2" y="236.2" width="6.4" height="6.4" rx="1" fill="#222a3f" stroke="#c3cadb" stroke-width="1.3"/>
<path d="M334 239.2 L335.2 240.6 L337 238.2" fill="none" stroke="#c3cadb" stroke-width="0.9"/></svg>
<div style="left:257px;top:264.3px;width:19.2px;height:11.4px;background:transparent;border:1.2px solid #c3cadb;border-radius:1px;"></div>
<span class="t" style="left:259.4px;top:266.34px;font-size:8px;line-height:8px;color:#c3cadb;font-weight:700;transform:scaleX(0.899);">16:9</span>
<svg class="i" style="left:278px;top:264px" width="30" height="13" viewBox="278 264 30 13"><path d="M278.8 272.6 L284 272.6 L281.4 275.8Z" fill="#c3cadb"/>
<rect x="288" y="265" width="10.4" height="10" fill="none" stroke="#c3cadb" stroke-width="1" stroke-dasharray="1.6 1.3"/>
<rect x="293.6" y="270.6" width="5.6" height="5.4" fill="#222a3f"/>
<path d="M294.2 271 L298.6 272.4 L296.9 273.3 L298.9 275.3 L298 276 L296.1 274 L295.2 275.6Z" fill="#c3cadb"/>
<path d="M301.6 272.6 L306.8 272.6 L304.2 275.8Z" fill="#c3cadb"/></svg>
<span class="t" style="left:314.8px;top:262.82px;font-size:12px;line-height:12px;color:#2a9ae8;font-weight:700;transform:scaleX(1.223);">V</span>
<span class="t" style="left:330.8px;top:262.82px;font-size:12px;line-height:12px;color:#dfe3ec;font-weight:700;transform:scaleX(1.061);">A</span>
<span class="t" style="left:262.6px;top:284.42px;font-size:12px;line-height:12px;color:#d8dce6;font-weight:400;transform:scaleX(0.764);font-family:'Liberation Mono',monospace;">00:00:00:000</span>
<svg class="i" style="left:332px;top:284px" width="10" height="14" viewBox="332 284 10 14"><path d="M336.8 284.4 L340.8 288.4 L332.8 288.4Z" fill="#e8ebf2"/><path d="M332.8 293 L340.8 293 L336.8 297Z" fill="#e8ebf2"/></svg>
<svg class="i" style="left:359px;top:54px" width="20" height="12" viewBox="359 54 20 12"><path d="M368.7 55 L377.7 64.8 L359.8 64.8Z" fill="#4a5676"/></svg>
<div style="left:354.4px;top:82px;width:27.6px;height:22.4px;background:#151a28;"></div>
<svg class="i" style="left:358px;top:85px" width="20" height="16" viewBox="358 85 20 16"><rect x="360" y="86.6" width="12.6" height="8.4" rx="1.2" fill="none" stroke="#2098ee" stroke-width="1.4"/>
<rect x="361.6" y="88.4" width="4" height="4.4" fill="#2098ee" opacity="0.55"/>
<rect x="364.4" y="90.6" width="12.6" height="9.4" rx="1" fill="#2098ee"/>
<path d="M365.6 92.4h1.4M367.9 92.4h1.4M370.2 92.4h1.4M372.5 92.4h1.4M374.8 92.4h1.4M365.6 98.2h1.4M367.9 98.2h1.4M370.2 98.2h1.4M372.5 98.2h1.4M374.8 98.2h1.4" stroke="#151a28" stroke-width="1.1"/>
<path d="M365 94.2h11.4" stroke="#5cc0ff" stroke-width="0.7" opacity="0.6"/></svg>
<svg class="i" style="left:359px;top:118px" width="20" height="17" viewBox="359 118 20 17"><ellipse cx="366.4" cy="130.6" rx="3" ry="2.7" fill="#c3cadb"/>
<path d="M368.6 130.6 L368.6 120.2 L373.4 121.8 L373.4 123.8 L369.9 122.8 L369.9 130.6Z" fill="#c3cadb"/>
<g fill="none" stroke="#c3cadb" stroke-width="1.1"><path d="M363.4 122 Q361.2 123.8 362.2 126.4"/><path d="M361.2 121.4 Q358.8 123.8 360 127"/>
<path d="M372.6 132.6 Q374.8 131.2 374.2 128.8"/><path d="M374.6 133.6 Q377.2 131.4 376.4 128.4"/></g></svg>
<svg class="i" style="left:359px;top:152px" width="20" height="17" viewBox="359 152 20 17"><rect x="360" y="158.6" width="12.4" height="8.6" fill="#c3cadb"/>
<path d="M361 160.3h1.5M363.6 160.3h1.5M366.2 160.3h1.5M368.8 160.3h1.5M361 165.6h1.5M363.6 165.6h1.5M366.2 165.6h1.5M368.8 165.6h1.5" stroke="#222a3f" stroke-width="1.1"/>
<rect x="361" y="161.8" width="10.4" height="2.4" fill="#222a3f" opacity="0.55"/>
<path d="M371 152.6 L372.3 155.3 L375.3 155.6 L373.1 157.6 L373.8 160.6 L371 159.1 L368.3 160.6 L369 157.6 L366.8 155.6 L369.8 155.3Z" fill="#c3cadb" stroke="#222a3f" stroke-width="0.6"/>
<path d="M372.6 159.6 L377.8 167.4" stroke="#c3cadb" stroke-width="1.7"/></svg>
<svg class="i" style="left:359px;top:187px" width="18" height="14" viewBox="359 187 18 14"><rect x="360" y="187.8" width="16.2" height="12.2" rx="1" fill="#c3cadb"/>
<rect x="361.1" y="188.9" width="6.6" height="10" fill="#222a3f"/><rect x="368.6" y="188.9" width="6.5" height="10" fill="#2d3650"/></svg>
<span class="t" style="left:361.2px;top:189.5px;font-size:9px;line-height:9px;font-weight:700;color:#dfe3ee;transform:scaleX(0.96)">A</span>
<span class="t" style="left:368.7px;top:189.5px;font-size:9px;line-height:9px;font-weight:700;color:#dfe3ee;transform:scaleX(0.96)">B</span>
<svg class="i" style="left:360px;top:221px" width="16" height="14" viewBox="360 221 16 14"><path d="M360.8 221.6 L375.2 221.6 L375.2 225 L370 225 L370 234.7 L366 234.7 L366 225 L360.8 225Z" fill="#c3cadb"/></svg>
<svg class="i" style="left:360px;top:254px" width="20" height="15" viewBox="360 254 20 15"><path d="M360.8 260.4 L365.6 260.4 L365.6 264.6 L370.4 266 L370.4 268.6 L360.8 268.6Z" fill="#c3cadb"/>
<g fill="#c3cadb"><circle cx="372" cy="257.6" r="2.5"/><circle cx="376" cy="260.4" r="2.5"/><circle cx="374.6" cy="264.8" r="2.5"/><circle cx="369.6" cy="264.8" r="2.5"/><circle cx="368" cy="260.4" r="2.5"/><circle cx="372" cy="261.4" r="3"/></g>
<circle cx="372" cy="261.4" r="1.5" fill="#222a3f"/></svg>
<svg class="i" style="left:359px;top:290px" width="20" height="11" viewBox="359 290 20 11"><path d="M359.9 290.6 L377.5 290.6 L368.7 300.4Z" fill="#c3cadb"/></svg>
<svg class="i" style="left:395px;top:53px" width="13" height="12" viewBox="395 53 13 12"><path d="M401.7 54 L401.7 64.6 M396.2 59.3 L407.2 59.3" stroke="#d5d9e4" stroke-width="3"/></svg>
<svg class="i" style="left:392px;top:99px" width="6" height="10" viewBox="392 99 6 10"><path d="M392.4 99.8 L397.2 104.1 L392.4 108.4Z" fill="#c3cadb"/></svg>
<svg class="i" style="left:394px;top:294px" width="20" height="14" viewBox="394 294 20 14"><path d="M395.8 296 L395.8 304.6 L403.4 304.6" fill="none" stroke="#c3cadb" stroke-width="1.3"/>
<rect x="395.2" y="294.4" width="14.2" height="2.4" fill="#c3cadb"/>
<path d="M408.8 296 L408.8 300.4" stroke="#c3cadb" stroke-width="1.3"/>
<path d="M405.2 301.4 L413.2 301.4 L409.2 306.8Z" fill="#c3cadb"/></svg>
<svg class="i" style="left:566px;top:47px" width="25" height="25" viewBox="566 47 25 25"><path d="M566.2 47.2 L591 47.2 L591 71.4Z" fill="#1e9df2"/>
<g transform="translate(583.4 54.6) rotate(45)"><rect x="-2" y="-4.6" width="4" height="5" rx="0.6" fill="#eaf4ff"/><rect x="-3.2" y="0.2" width="6.4" height="1.5" fill="#eaf4ff"/><rect x="-0.5" y="1.6" width="1" height="4" fill="#eaf4ff"/></g></svg>
<svg class="i" style="left:605px;top:52px" width="19" height="16" viewBox="605 52 19 16"><path d="M606.2 54.2 Q606.2 53 607.4 53 L611.6 53 L613.2 54.8 L618.2 54.8 Q619.2 54.8 619.2 55.8 L619.2 57 L609.6 57 L607.6 64 L606.2 64Z" fill="#c3cadb"/>
<path d="M609.8 57.8 L621.2 57.8 L619 65.4 L607.4 65.4Z" fill="#c3cadb"/>
<circle cx="619.6" cy="64.4" r="3.6" fill="#1b2133"/>
<path d="M619.6 61.6 L619.6 67.2 M616.8 64.4 L622.4 64.4" stroke="#eef0f5" stroke-width="1.2"/></svg>
<svg class="i" style="left:637px;top:52px" width="16" height="15" viewBox="637 52 16 15"><circle cx="645" cy="59.4" r="7" fill="#55607e"/><circle cx="645" cy="59.4" r="2.1" fill="#1b2133"/>
<g stroke="#1b2133" stroke-width="0.9"><path d="M645 57.3 L650 54.4 M647 59 L649.4 64.4 M646.2 61.2 L640.4 63.6 M643.2 61 L639 56 M643.6 58 L645.8 52.4"/></g></svg>
<div style="left:664.4px;top:50px;width:88.8px;height:17.8px;background:#2b3552;border-radius:3.5px;"></div>
<div style="left:693.2px;top:50px;width:1px;height:17.8px;background:#1b2133;"></div>
<div style="left:723.8px;top:50px;width:1px;height:17.8px;background:#1b2133;"></div>
<svg class="i" style="left:671px;top:54px" width="74" height="11" viewBox="671 54 74 11"><rect x="672" y="54.8" width="12.4" height="8.8" fill="#2098ee"/>
<path d="M673 56.2h1.3M675.3 56.2h1.3M677.6 56.2h1.3M679.9 56.2h1.3M682.2 56.2h1.3M673 62.2h1.3M675.3 62.2h1.3M677.6 62.2h1.3M679.9 62.2h1.3M682.2 62.2h1.3" stroke="#2b3552" stroke-width="0.9"/>
<path d="M672 57.5h12.4M672 61h12.4" stroke="#2b3552" stroke-width="0.5"/>
<rect x="702.8" y="54.4" width="12" height="9.2" fill="#2098ee"/>
<circle cx="708.8" cy="57.4" r="1.7" fill="#1a3350"/><path d="M705.4 62.2 Q705.4 59.6 708.8 59.6 Q712.2 59.6 712.2 62.2Z" fill="#1a3350"/>
<ellipse cx="735" cy="62.2" rx="2" ry="1.7" fill="#2098ee"/><ellipse cx="741.8" cy="60.8" rx="2" ry="1.7" fill="#2098ee"/>
<path d="M736.2 62.2 L736.2 55.4 L744 53.8 L744 60.8 L742.8 60.8 L742.8 56.6 L737.4 57.8 L737.4 62.2Z" fill="#2098ee"/></svg>
<div style="left:814px;top:50px;width:22.3px;height:17.8px;background:#2b3552;border-radius:3.5px;"></div>
<div style="left:838.5px;top:50px;width:45px;height:17.8px;background:#2b3552;border-radius:3.5px;"></div>
<div style="left:861px;top:50px;width:1px;height:17.8px;background:#1b2133;"></div>
<svg class="i" style="left:818px;top:53px" width="62" height="12" viewBox="818 53 62 12"><rect x="819" y="54" width="12" height="6.6" fill="#2098ee"/><rect x="819" y="62" width="12" height="2" fill="#2098ee"/>
<g fill="#eef0f5"><rect x="844.8" y="54" width="2.2" height="2.2"/><rect x="848.2" y="54" width="7.4" height="2.2"/><rect x="844.8" y="57.9" width="2.2" height="2.2"/><rect x="848.2" y="57.9" width="7.4" height="2.2"/><rect x="844.8" y="61.8" width="2.2" height="2.2"/><rect x="848.2" y="61.8" width="7.4" height="2.2"/></g>
<g fill="#2098ee"><rect x="867.6" y="54" width="4.6" height="4.2"/><rect x="873.8" y="54" width="4.6" height="4.2"/><rect x="867.6" y="59.8" width="4.6" height="4.2"/><rect x="873.8" y="59.8" width="4.6" height="4.2"/></g></svg>
<span class="t" style="left:894.4px;top:52.6px;font-size:7.5px;line-height:7.5px;color:#c3cadb;transform:scaleX(1.001)">A</span>
<span class="t" style="left:894.6px;top:58.6px;font-size:7.5px;line-height:7.5px;color:#c3cadb;transform:scaleX(1.001)">Z</span>
<svg class="i" style="left:900px;top:53px" width="7" height="13" viewBox="900 53 7 13"><path d="M903.4 53.6 L903.4 62" stroke="#c3cadb" stroke-width="1.4"/><path d="M900.4 60.8 L906.4 60.8 L903.4 65Z" fill="#c3cadb"/></svg>
<div style="left:929px;top:54.9px;width:55.5px;height:2.8px;background:#030408;border-radius:1.4px;"></div>
<svg class="i" style="left:949px;top:53px" width="8" height="10" viewBox="949 53 8 10"><path d="M950 54.4 Q950 53.4 951 53.4 L954.6 53.4 Q955.6 53.4 955.6 54.4 L955.6 59.4 L952.8 62.2 L950 59.4Z" fill="#b7bfd2"/></svg>
<div style="left:931.5px;top:295.6px;width:64px;height:13.8px;background:#262f49;"></div>
<svg class="i" style="left:935px;top:297px" width="56" height="12" viewBox="935 297 56 12"><rect x="936.2" y="298.2" width="10" height="6.6" rx="1" fill="#2098ee"/>
<rect x="939.8" y="301" width="11" height="7" rx="1" fill="#2098ee" stroke="#262f49" stroke-width="0.9"/>
<rect x="956.8" y="298.8" width="12.4" height="8.6" rx="1" fill="#c3cadb"/><rect x="958" y="300.2" width="4.4" height="5.8" fill="#262f49" opacity="0.55"/><rect x="963.6" y="300.2" width="4.4" height="5.8" fill="#262f49" opacity="0.55"/>
<path d="M985 299.4 L980.4 299.4 L980.4 307.6 L988.6 307.6 L988.6 303" fill="none" stroke="#c3cadb" stroke-width="1.2"/>
<path d="M983.4 304.8 L983.8 302.6 L988.2 298.2 L989.8 299.8 L985.4 304.2Z" fill="#c3cadb"/></svg>
<svg class="i" style="left:19px;top:326px" width="942" height="19" viewBox="19 326 942 19"><rect x="20" y="328.8" width="18.4" height="12.8" rx="1.5" fill="#c3cadb" /><rect x="22" y="331.6" width="6.4" height="7.2" rx="0" fill="#222a3f" /><rect x="29.8" y="331.6" width="6.4" height="7.2" rx="0" fill="#222a3f" /><path d="M21.6 330.1h1.4M24.4 330.1h1.4M27.2 330.1h1.4M30 330.1h1.4M32.8 330.1h1.4M35.6 330.1h1.2M21.6 340.3h1.4M24.4 340.3h1.4M27.2 340.3h1.4M30 340.3h1.4M32.8 340.3h1.4M35.6 340.3h1.2" fill="none" stroke="#222a3f" stroke-width="1" /><rect x="22.6" y="332.2" width="5.2" height="6" rx="0" fill="#3b4561" /><rect x="30.4" y="332.2" width="5.2" height="6" rx="0" fill="#3b4561" /><rect x="130" y="327.8" width="8.6" height="11.6" rx="1.6" fill="none" stroke="#c3cadb" stroke-width="1.3"/><path d="M134.4 330.6 L140.4 330.6 L144 334.2 L144 342.6 Q144 343.6 143 343.6 L134.4 343.6 Q133.4 343.6 133.4 342.6 L133.4 331.6 Q133.4 330.6 134.4 330.6Z" fill="#c3cadb" /><path d="M139.8 330.2 L139.8 334.8 L144.4 334.8" fill="#222a3f" opacity="0.5"/><path d="M135.6 339.4 L140.4 339.4" fill="none" stroke="#222a3f" stroke-width="1.2" /><path d="M139.4 337.2 L142 339.4 L139.4 341.6Z" fill="#222a3f" /><path d="M167.6 330.8 L176.6 339.6" fill="none" stroke="#c3cadb" stroke-width="2.4" /><circle cx="166.8" cy="330" r="2.7" fill="#c3cadb"/><path d="M163.4 326.6 L166.8 330" stroke="#222a3f" stroke-width="1.9"/><circle cx="177" cy="340" r="2.7" fill="#c3cadb"/><path d="M180.4 343.4 L177 340" stroke="#222a3f" stroke-width="1.9"/><path d="M178.6 328 L175 331.6" fill="none" stroke="#c3cadb" stroke-width="3" /><path d="M177.4 330.4 L176.2 329.2" fill="none" stroke="#222a3f" stroke-width="0.8" /><path d="M175 331.6 L168.6 338.4" fill="none" stroke="#c3cadb" stroke-width="1.7" /><path d="M169.8 336.6 L171 337.8 L166 341.6 L165.4 341Z" fill="#c3cadb" /><path d="M197.2 332 L203.2 327.8 L203.2 330.4 Q210.8 330.6 210.8 336.8 Q210.8 340.6 206.6 342 Q208.4 339.4 207.4 336.8 Q206.4 334.2 203.2 334 L203.2 336.4Z" fill="#c3cadb" /><path d="M253 332 L247 327.8 L247 330.4 Q239.4 330.6 239.4 336.8 Q239.4 340.6 243.6 342 Q241.8 339.4 242.8 336.8 Q243.8 334.2 247 334 L247 336.4Z" fill="#46506f" /><path d="M279.5 327.8 L279.5 340.6 M296.5 327.8 L296.5 340.6" fill="none" stroke="#c3cadb" stroke-width="1.6" /><path d="M281 334.2 L286.6 334.2 M283.4 331.8 L281 334.2 L283.4 336.6" fill="none" stroke="#c3cadb" stroke-width="1.2" /><path d="M295 334.2 L289.4 334.2 M292.6 331.8 L295 334.2 L292.6 336.6" fill="none" stroke="#c3cadb" stroke-width="1.2" /><rect x="322" y="327.9" width="16.6" height="12.6" rx="0" fill="none" stroke="#c3cadb" stroke-width="1.4"/><path d="M324.6 332 L330.2 332 M326.4 330.2 L324.6 332 L326.4 333.8" fill="none" stroke="#c3cadb" stroke-width="1" /><path d="M336 336.4 L330.4 336.4 M334.2 334.6 L336 336.4 L334.2 338.2" fill="none" stroke="#c3cadb" stroke-width="1" /><path d="M372.2 327.2 L372.2 341" fill="none" stroke="#c3cadb" stroke-width="1.4" /><path d="M363.6 334.2 L369.8 334.2 M366.6 331 L363.4 334.2 L366.6 337.4" fill="none" stroke="#c3cadb" stroke-width="1.4" /><path d="M381 334.2 L374.8 334.2 M378 331 L381.2 334.2 L378 337.4" fill="none" stroke="#c3cadb" stroke-width="1.4" /><rect x="410.6" y="328.4" width="7.6" height="11.8" rx="1" fill="none" stroke="#c3cadb" stroke-width="1.3"/><path d="M404.6 334.2 L410 334.2 M407 331.8 L404.6 334.2 L407 336.6" fill="none" stroke="#aab2c6" stroke-width="1.2" /><path d="M424.4 334.2 L419 334.2 M422 331.8 L424.4 334.2 L422 336.6" fill="none" stroke="#aab2c6" stroke-width="1.2" /><circle cx="455.4" cy="335" r="6.3" fill="#c3cadb"/><circle cx="455.40" cy="331.60" r="1.6" fill="#222a3f"/><circle cx="458.63" cy="333.95" r="1.6" fill="#222a3f"/><circle cx="457.41" cy="337.75" r="1.6" fill="#222a3f"/><circle cx="453.39" cy="337.75" r="1.6" fill="#222a3f"/><circle cx="452.17" cy="333.95" r="1.6" fill="#222a3f"/><circle cx="455.4" cy="335" r="0.8" fill="#222a3f"/><circle cx="461.6" cy="337.6" r="3.2" fill="#e01018"/><ellipse cx="491.4" cy="337.6" rx="2.1" ry="1.8" fill="#c3cadb"/><path d="M492.6 337.6 L492.6 329.6 L497 328.6 L497 331 L493.9 331.6 L493.9 337.6Z" fill="#c3cadb" /><path d="M498.4 331 L498.4 338.4 M500.6 328.2 L500.6 343 M502.8 330.6 L502.8 340.4 M504.8 333.2 L504.8 337.4" fill="none" stroke="#c3cadb" stroke-width="1.5" /><rect x="531.6" y="329.4" width="16.8" height="11.8" rx="1" fill="#c3cadb" /><rect x="533.2" y="331.8" width="6" height="6.8" rx="0" fill="#222a3f" opacity="0.75"/><rect x="541" y="331.8" width="6" height="6.8" rx="0" fill="#222a3f" opacity="0.75"/><path d="M533 330.5h1.3M535.6 330.5h1.3M538.2 330.5h1.3M540.8 330.5h1.3M543.4 330.5h1.3M546 330.5h1.3M533 340.1h1.3M535.6 340.1h1.3M538.2 340.1h1.3M540.8 340.1h1.3M543.4 340.1h1.3M546 340.1h1.3" fill="none" stroke="#222a3f" stroke-width="0.9" /><ellipse cx="538" cy="339" rx="2" ry="1.6" fill="#c3cadb"/><path d="M539 339 L539 331.4 L544.6 330 L544.6 337.6 L543.6 337.6 L543.6 332.4 L540 333.2 L540 339Z" fill="#c3cadb" /><ellipse cx="543.2" cy="337.6" rx="1.8" ry="1.5" fill="#c3cadb"/><circle cx="577.4" cy="333.4" r="4.6" fill="#c3cadb"/><circle cx="572.6" cy="335" r="4.6" fill="#c3cadb" stroke="#222a3f" stroke-width="0.7"/><circle cx="567.8" cy="336.8" r="4.4" fill="#c3cadb" stroke="#222a3f" stroke-width="0.7"/><rect x="604.8" y="329.4" width="17.2" height="11.8" rx="0.8" fill="#c3cadb" /><path d="M607.2 331.6 L613.4 331.6 L613.4 333.4 L611.3 333.4 L611.3 338.2 L609.3 338.2 L609.3 333.4 L607.2 333.4Z" fill="#1c2236" /><path d="M614.6 332.6h5.6M614.6 334.8h5.6M614.6 337h5.6M607.2 339.4h13" fill="none" stroke="#3a4258" stroke-width="0.9" /><rect x="648.6" y="330" width="16" height="10.8" rx="0" fill="none" stroke="#c3cadb" stroke-width="1.4"/><path d="M656.6 330 L656.6 340.8 M648.6 335.4 L664.6 335.4" fill="none" stroke="#c3cadb" stroke-width="1.2" /><circle cx="706.6" cy="329.4" r="1.6" fill="#c3cadb"/><path d="M698.8 332 L702.6 330.6 L705.4 332.8 L708.4 333" fill="none" stroke="#c3cadb" stroke-width="1.4" stroke-linecap="round" stroke-linejoin="round"/><path d="M702.8 331 L701.4 335.4 L704.6 337.6 L703.4 341.6" fill="none" stroke="#c3cadb" stroke-width="1.6" stroke-linecap="round" stroke-linejoin="round"/><path d="M701.4 335.4 L699.4 337.8 L696.6 337.6" fill="none" stroke="#c3cadb" stroke-width="1.5" stroke-linecap="round" stroke-linejoin="round"/><path d="M691 330.6h5.6M691 333h6.4M691 335.4h5" fill="none" stroke="#c3cadb" stroke-width="1.1" /><path d="M741 328.8 Q747 329 749 333.4 Q750.4 338 745.4 340.6 Q741.4 342.4 738.8 339 Q736.6 337.4 733.8 336.6 Q731.6 334.4 733.6 331.6 Q736.4 328.6 741 328.8Z" fill="none" stroke="#c3cadb" stroke-width="1.2" /><circle cx="741" cy="328.8" r="1.1" fill="#c3cadb"/><circle cx="748.6" cy="332.6" r="1.1" fill="#c3cadb"/><circle cx="749.2" cy="337.6" r="1.1" fill="#c3cadb"/><circle cx="744.2" cy="341.2" r="1.1" fill="#c3cadb"/><circle cx="738.8" cy="339" r="1.1" fill="#c3cadb"/><circle cx="733.6" cy="336.4" r="1.1" fill="#c3cadb"/><circle cx="733.8" cy="331.4" r="1.1" fill="#c3cadb"/><path d="M774 328.4 L770.8 328.4 L770.8 332 M783 328.4 L786.2 328.4 L786.2 332 M774 340.6 L770.8 340.6 L770.8 337 M783 340.6 L786.2 340.6 L786.2 337" fill="none" stroke="#c3cadb" stroke-width="1.5" /><rect x="774.6" y="331.4" width="7.8" height="6.2" rx="0" fill="none" stroke="#9aa3b8" stroke-width="1"/><path d="M778.5 332.6 L778.5 336.4 M776.4 334.5 L780.6 334.5" fill="none" stroke="#c3cadb" stroke-width="0.9" /><rect x="858.9" y="328.8" width="15.4" height="12.4" rx="0.8" fill="#c3cadb" /><path d="M859.4 329.4 L866.6 335.6 L873.8 329.4" fill="none" stroke="#222a3f" stroke-width="1.1" /><path d="M868.4 342 L875.6 334" fill="none" stroke="#222a3f" stroke-width="3.6" /><path d="M869.4 341 L875.4 334.4" fill="none" stroke="#c3cadb" stroke-width="1.8" /><rect x="898.9" y="329.2" width="17.4" height="12.4" rx="0.8" fill="#c3cadb" /><rect x="900.8" y="331.8" width="13.6" height="7.2" rx="0" fill="#222a3f" opacity="0.6"/><path d="M900.2 330.4h1.3M902.8 330.4h1.3M905.4 330.4h1.3M908 330.4h1.3M910.6 330.4h1.3M900.2 340.4h1.3M902.8 340.4h1.3M905.4 340.4h1.3M908 340.4h1.3M910.6 340.4h1.3M913.2 340.4h1.3" fill="none" stroke="#222a3f" stroke-width="0.9" /><path d="M903.6 339.4 L914.6 329" fill="none" stroke="#222a3f" stroke-width="3.4" /><path d="M904.6 338.6 L914.4 329.4" fill="none" stroke="#c3cadb" stroke-width="1.9" /><circle cx="914.8" cy="329" r="1.5" fill="#c3cadb"/><rect x="944.2" y="329.8" width="15" height="12.4" rx="0" fill="none" stroke="#c3cadb" stroke-width="1.1"/><path d="M944.2 342.2 L959.2 329.8 L959.2 342.2Z" fill="#c3cadb" opacity="0.9"/><rect x="947" y="331.4" width="2.4" height="4.4" rx="1.2" fill="#c3cadb" /><path d="M946 335 Q946 337.4 948.2 337.4 Q950.4 337.4 950.4 335 M948.2 337.4 L948.2 339" fill="none" stroke="#c3cadb" stroke-width="0.8" /><path d="M953.2 336 L958 336 L958 337.6 L956.4 337.6 L956.4 341 L954.8 341 L954.8 337.6 L953.2 337.6Z" fill="#222a3f" /></svg>
<div style="left:57.3px;top:323.2px;width:49.6px;height:22.4px;background:#151a28;"></div>
<svg class="i" style="left:72px;top:328px" width="20" height="14" viewBox="72 328 20 14"><rect x="73.3" y="328.8" width="17.9" height="12" rx="1.4" fill="#2098ee"/>
<path d="M74.6 334.4h15.4M74.6 337.4h15.4" stroke="#151a28" stroke-width="1.1"/>
<rect x="74.6" y="330.2" width="15.4" height="3.4" fill="#35aefa"/>
<path d="M82.2 329.6 L86.8 329.6 L84.5 332.6Z" fill="#151a28"/></svg>
<span class="t" style="left:810.6px;top:326.4px;font-size:17.5px;line-height:17.5px;font-weight:700;color:#c3cadb;transform:scaleX(0.98)">T</span>
<span class="t" style="left:820.2px;top:333.2px;font-size:9px;line-height:9px;font-weight:400;color:#c3cadb;transform:scaleX(0.86)">3D</span>
<svg class="i" style="left:749px;top:353px" width="155" height="16" viewBox="749 353 155 16"><circle cx="755.6" cy="359.4" r="4.9" fill="none" stroke="#c3cadb" stroke-width="1.3"/><path d="M759.2 363.2 L764 368" fill="none" stroke="#c3cadb" stroke-width="1.8" /><path d="M753 359.4 L758.2 359.4" fill="none" stroke="#c3cadb" stroke-width="1.3" /><circle cx="843.2" cy="359.4" r="4.9" fill="none" stroke="#c3cadb" stroke-width="1.3"/><path d="M846.8 363.2 L851.6 368" fill="none" stroke="#c3cadb" stroke-width="1.8" /><path d="M840.6 359.4 L845.8 359.4 M843.2 356.8 L843.2 362" fill="none" stroke="#c3cadb" stroke-width="1.3" /><rect x="864.6" y="356.2" width="11.4" height="9" rx="1" fill="none" stroke="#8d96ac" stroke-width="1.1"/><path d="M866.8 360.7 L873.8 360.7 M868.6 359 L866.8 360.7 L868.6 362.4 M872 359 L873.8 360.7 L872 362.4" fill="none" stroke="#c3cadb" stroke-width="1" /><circle cx="896.4" cy="360.6" r="6.2" fill="#c3cadb"/><path d="M896.4 356 L896.4 360.8 L900 363.2" fill="none" stroke="#222a3f" stroke-width="1.2" /></svg>
<div style="left:772.5px;top:358.3px;width:55.5px;height:3.2px;background:#020306;border-radius:1.5px;"></div>
<svg class="i" style="left:808px;top:356px" width="8" height="10" viewBox="808 356 8 10"><path d="M808.2 357.4 Q808.2 356.4 809.2 356.4 L813.8 356.4 Q814.8 356.4 814.8 357.4 L814.8 362.4 L811.5 365.5 L808.2 362.4Z" fill="#b7bfd2"/></svg>
<span class="t" style="left:916px;top:355.70px;font-size:11px;line-height:11px;color:#cfd4e0;font-weight:400;transform:scaleX(0.881);font-family:'Liberation Mono',monospace;">0:00:15.001</span>
<svg class="i" style="left:4px;top:380px" width="150" height="186" viewBox="4 380 150 186"><path d="M22.8 383.6 L21.4 383.6 L21.4 391.2 L22.8 391.2" fill="none" stroke="#c3cadb" stroke-width="1" /><rect x="24" y="383.3" width="7.6" height="2.1" rx="0" fill="#c3cadb" /><rect x="24" y="386.3" width="7.6" height="2.1" rx="0" fill="#c3cadb" /><rect x="24" y="389.3" width="7.6" height="2.1" rx="0" fill="#c3cadb" /><path d="M32.6 385.4 L35.8 385.4 L34.2 383.2Z" fill="#c3cadb" /><path d="M32.6 389.4 L35.8 389.4 L34.2 391.6Z" fill="#c3cadb" /><path d="M32.8 387.4 L35.6 387.4" fill="none" stroke="#c3cadb" stroke-width="0.9" /><rect x="62" y="383.3" width="7.4" height="2.2" rx="0" fill="#c3cadb" /><rect x="62" y="386.4" width="7.4" height="2.2" rx="0" fill="#c3cadb" /><rect x="62" y="389.5" width="7.4" height="2.2" rx="0" fill="#c3cadb" /><path d="M70.6 384.8 L74.4 384.8 M72.5 383 L72.5 386.6 M70.6 390 L74.4 390" fill="none" stroke="#c3cadb" stroke-width="1" /><path d="M98.6 383.2 L103.2 390 L94 390Z" fill="#1fe386" /><path d="M104.8 385.3 L109.4 385.3 L107.1 387.8Z" fill="#e4e8f0" /><rect x="8.3" y="420" width="12" height="8.8" rx="1.6" fill="#c3cadb" /><path d="M20.8 423 L24 420.6 L24 428.2 L20.8 425.8Z" fill="#c3cadb" /><path d="M12.6 422 L16.4 424.4 L12.6 426.8Z" fill="#232c43" /><rect x="8.3" y="466.6" width="12" height="8.8" rx="1.6" fill="#c3cadb" /><path d="M20.8 469.6 L24 467.2 L24 474.8 L20.8 472.4Z" fill="#c3cadb" /><path d="M13 469.4 L14.4 468.6 L14.4 473.6" fill="none" stroke="#232c43" stroke-width="1.2" /><circle cx="14.6" cy="550.2" r="2.3" fill="#c3cadb"/><path d="M16 551.6 L19.4 554.4" fill="none" stroke="#c3cadb" stroke-width="2.2" stroke-linecap="round"/><path d="M20 555 Q22.6 557 24.6 555" fill="none" stroke="#c3cadb" stroke-width="0.9" /><g transform="translate(58.4 431.4) rotate(-45)" fill="none" stroke="#b4bccf" stroke-width="1.2"><rect x="-5.6" y="-1.9" width="6.6" height="3.8" rx="1.9"/><rect x="-1" y="-1.9" width="6.6" height="3.8" rx="1.9"/></g><path d="M64.6 433.6 L68.8 433.6 L66.7 436Z" fill="#c3cadb" /><path d="M88.8 429.7 L91.2 429.7 L94.8 427.1 L94.8 435.9 L91.2 433.3 L88.8 433.3Z" fill="#c3cadb"/><path d="M96.39999999999999 429.1 Q98.0 431.5 96.39999999999999 433.9" fill="none" stroke="#c3cadb" stroke-width="1.1"/><path d="M98.39999999999999 427.7 Q101.2 431.5 98.39999999999999 435.3" fill="none" stroke="#c3cadb" stroke-width="1.1"/><rect x="126.80" y="426.50" width="1.92" height="1.92" fill="#d0d5e2"/><rect x="128.72" y="426.50" width="1.92" height="1.92" fill="#d0d5e2" opacity="0.28"/><rect x="130.64" y="426.50" width="1.92" height="1.92" fill="#d0d5e2"/><rect x="132.56" y="426.50" width="1.92" height="1.92" fill="#d0d5e2" opacity="0.28"/><rect x="134.48" y="426.50" width="1.92" height="1.92" fill="#d0d5e2"/><rect x="126.80" y="428.42" width="1.92" height="1.92" fill="#d0d5e2" opacity="0.28"/><rect x="128.72" y="428.42" width="1.92" height="1.92" fill="#d0d5e2"/><rect x="130.64" y="428.42" width="1.92" height="1.92" fill="#d0d5e2" opacity="0.28"/><rect x="132.56" y="428.42" width="1.92" height="1.92" fill="#d0d5e2"/><rect x="134.48" y="428.42" width="1.92" height="1.92" fill="#d0d5e2" opacity="0.28"/><rect x="126.80" y="430.34" width="1.92" height="1.92" fill="#d0d5e2"/><rect x="128.72" y="430.34" width="1.92" height="1.92" fill="#d0d5e2" opacity="0.28"/><rect x="130.64" y="430.34" width="1.92" height="1.92" fill="#d0d5e2"/><rect x="132.56" y="430.34" width="1.92" height="1.92" fill="#d0d5e2" opacity="0.28"/><rect x="134.48" y="430.34" width="1.92" height="1.92" fill="#d0d5e2"/><rect x="126.80" y="432.26" width="1.92" height="1.92" fill="#d0d5e2" opacity="0.28"/><rect x="128.72" y="432.26" width="1.92" height="1.92" fill="#d0d5e2"/><rect x="130.64" y="432.26" width="1.92" height="1.92" fill="#d0d5e2" opacity="0.28"/><rect x="132.56" y="432.26" width="1.92" height="1.92" fill="#d0d5e2"/><rect x="134.48" y="432.26" width="1.92" height="1.92" fill="#d0d5e2" opacity="0.28"/><rect x="126.80" y="434.18" width="1.92" height="1.92" fill="#d0d5e2"/><rect x="128.72" y="434.18" width="1.92" height="1.92" fill="#d0d5e2" opacity="0.28"/><rect x="130.64" y="434.18" width="1.92" height="1.92" fill="#d0d5e2"/><rect x="132.56" y="434.18" width="1.92" height="1.92" fill="#d0d5e2" opacity="0.28"/><rect x="134.48" y="434.18" width="1.92" height="1.92" fill="#d0d5e2"/><g transform="translate(58.4 477.8) rotate(-45)" fill="none" stroke="#4b5878" stroke-width="1.2"><rect x="-5.6" y="-1.9" width="6.6" height="3.8" rx="1.9"/><rect x="-1" y="-1.9" width="6.6" height="3.8" rx="1.9"/></g><path d="M88.8 476.2 L91.2 476.2 L94.8 473.6 L94.8 482.4 L91.2 479.8 L88.8 479.8Z" fill="#c3cadb"/><path d="M96.39999999999999 475.6 Q98.0 478 96.39999999999999 480.4" fill="none" stroke="#c3cadb" stroke-width="1.1"/><path d="M98.39999999999999 474.2 Q101.2 478 98.39999999999999 481.8" fill="none" stroke="#c3cadb" stroke-width="1.1"/><rect x="126.80" y="471.80" width="1.92" height="1.92" fill="#d0d5e2"/><rect x="128.72" y="471.80" width="1.92" height="1.92" fill="#d0d5e2" opacity="0.28"/><rect x="130.64" y="471.80" width="1.92" height="1.92" fill="#d0d5e2"/><rect x="132.56" y="471.80" width="1.92" height="1.92" fill="#d0d5e2" opacity="0.28"/><rect x="134.48" y="471.80" width="1.92" height="1.92" fill="#d0d5e2"/><rect x="126.80" y="473.72" width="1.92" height="1.92" fill="#d0d5e2" opacity="0.28"/><rect x="128.72" y="473.72" width="1.92" height="1.92" fill="#d0d5e2"/><rect x="130.64" y="473.72" width="1.92" height="1.92" fill="#d0d5e2" opacity="0.28"/><rect x="132.56" y="473.72" width="1.92" height="1.92" fill="#d0d5e2"/><rect x="134.48" y="473.72" width="1.92" height="1.92" fill="#d0d5e2" opacity="0.28"/><rect x="126.80" y="475.64" width="1.92" height="1.92" fill="#d0d5e2"/><rect x="128.72" y="475.64" width="1.92" height="1.92" fill="#d0d5e2" opacity="0.28"/><rect x="130.64" y="475.64" width="1.92" height="1.92" fill="#d0d5e2"/><rect x="132.56" y="475.64" width="1.92" height="1.92" fill="#d0d5e2" opacity="0.28"/><rect x="134.48" y="475.64" width="1.92" height="1.92" fill="#d0d5e2"/><rect x="126.80" y="477.56" width="1.92" height="1.92" fill="#d0d5e2" opacity="0.28"/><rect x="128.72" y="477.56" width="1.92" height="1.92" fill="#d0d5e2"/><rect x="130.64" y="477.56" width="1.92" height="1.92" fill="#d0d5e2" opacity="0.28"/><rect x="132.56" y="477.56" width="1.92" height="1.92" fill="#d0d5e2"/><rect x="134.48" y="477.56" width="1.92" height="1.92" fill="#d0d5e2" opacity="0.28"/><rect x="126.80" y="479.48" width="1.92" height="1.92" fill="#d0d5e2"/><rect x="128.72" y="479.48" width="1.92" height="1.92" fill="#d0d5e2" opacity="0.28"/><rect x="130.64" y="479.48" width="1.92" height="1.92" fill="#d0d5e2"/><rect x="132.56" y="479.48" width="1.92" height="1.92" fill="#d0d5e2" opacity="0.28"/><rect x="134.48" y="479.48" width="1.92" height="1.92" fill="#d0d5e2"/><g transform="translate(58.4 520.4) rotate(-45)" fill="none" stroke="#4b5878" stroke-width="1.2"><rect x="-5.6" y="-1.9" width="6.6" height="3.8" rx="1.9"/><rect x="-1" y="-1.9" width="6.6" height="3.8" rx="1.9"/></g><g transform="translate(58.4 559.4) rotate(-45)" fill="none" stroke="#4b5878" stroke-width="1.2"><rect x="-5.6" y="-1.9" width="6.6" height="3.8" rx="1.9"/><rect x="-1" y="-1.9" width="6.6" height="3.8" rx="1.9"/></g><path d="M88.8 558.0 L91.2 558.0 L94.8 555.4 L94.8 564.1999999999999 L91.2 561.5999999999999 L88.8 561.5999999999999Z" fill="#c3cadb"/><path d="M96.39999999999999 557.4 Q98.0 559.8 96.39999999999999 562.1999999999999" fill="none" stroke="#c3cadb" stroke-width="1.1"/><path d="M98.39999999999999 556.0 Q101.2 559.8 98.39999999999999 563.5999999999999" fill="none" stroke="#c3cadb" stroke-width="1.1"/><path d="M128 558.4 L130.2 562.4 L133.2 562.4 L135.4 558.4" fill="none" stroke="#c3cadb" stroke-width="1.6" /></svg>
<span class="t" style="left:8.2px;top:512.6px;font-size:5.5px;line-height:5.5px;font-weight:700;color:#c3cadb;transform:scaleX(1.001)">1</span>
<span class="t" style="left:12.4px;top:506.6px;font-size:12.5px;line-height:12.5px;font-weight:700;color:#c3cadb;transform:scaleX(1.001)">T</span>
<div style="left:66.9px;top:574.7px;width:18.8px;height:8.6px;background:#1d3658;"></div>
<svg class="i" style="left:67px;top:574px" width="52" height="10" viewBox="67 574 52 10"><path d="M70 579 L73.6 579 M71.8 577.2 L71.8 580.8" stroke="#2098ee" stroke-width="1"/>
<path d="M75 581.2 L77.2 581.2 L79 578 L83.4 578" fill="none" stroke="#2098ee" stroke-width="1.1"/><path d="M79.6 576.6 L83.4 576.6" stroke="#2098ee" stroke-width="0.9"/>
<path d="M100.4 575.8 L100.4 582.2 L96.6 579Z" fill="#dfe3ec"/><path d="M112.8 575.8 L112.8 582.2 L116.8 579Z" fill="#dfe3ec"/></svg>
<svg class="i" style="left:983px;top:403px" width="10" height="164" viewBox="983 403 10 164"><path d="M984.4 407.2 L991 407.2 L987.7 403.8Z" fill="#e4e8f0"/><path d="M984.4 562.8 L991 562.8 L987.7 566.2Z" fill="#e4e8f0"/></svg>
<svg class="i" style="left:150px;top:376px" width="12" height="12" viewBox="150 376 12 12"><path d="M151 377.6 L159.2 377.6 L159.2 382.4 L155.1 386 L151 382.4Z" fill="#ece8dc"/><path d="M156.2 378 L156.2 385" stroke="#8a8670" stroke-width="0.8"/></svg>
<svg class="i" style="left:156px;top:402px" width="16" height="42" viewBox="156 402 16 42"><path d="M158.4 404 L158.4 430" stroke="#a86c10" stroke-width="1.6" stroke-dasharray="1.6 1.8"/><rect x="161" y="430.4" width="10" height="8.8" fill="#14100a" opacity="0.88"/><path d="M162.2 433.6 L163.8 433.6 L166 431.8 L166 437.8 L163.8 436 L162.2 436Z" fill="#f0a820"/><path d="M167.2 433 Q168.4 434.8 167.2 436.6 M168.8 432 Q170.6 434.8 168.8 437.6" fill="none" stroke="#f0a820" stroke-width="0.8"/></svg>
</div>
</body>
</html>
